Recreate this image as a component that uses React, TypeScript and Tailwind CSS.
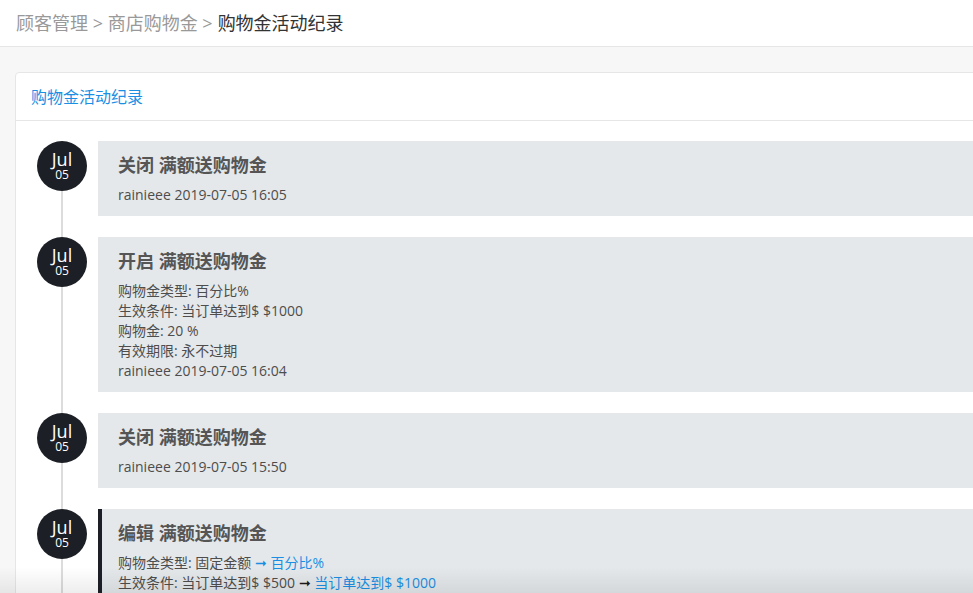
import React from "react";

const font = { fontFamily: '"Open Sans", "Noto Sans CJK SC", sans-serif' };

type Line = { label: string; from?: string; to?: string; value?: string; blueArrow?: boolean };
type Item = { title: string; lines: Line[]; meta: string; active?: boolean };

const items: Item[] = [
  { title: "关闭 满额送购物金", lines: [], meta: "rainieee 2019-07-05 16:05" },
  {
    title: "开启 满额送购物金",
    lines: [
      { label: "购物金类型", value: "百分比%" },
      { label: "生效条件", value: "当订单达到$ $1000" },
      { label: "购物金", value: "20 %" },
      { label: "有效期限", value: "永不过期" },
    ],
    meta: "rainieee 2019-07-05 16:04",
  },
  { title: "关闭 满额送购物金", lines: [], meta: "rainieee 2019-07-05 15:50" },
  {
    title: "编辑 满额送购物金",
    active: true,
    lines: [
      { label: "购物金类型", from: "固定金额", to: "百分比%", blueArrow: true },
      { label: "生效条件", from: "当订单达到$ $500", to: "当订单达到$ $1000" },
      { label: "购物金", from: "$ 50", to: "20 %" },
    ],
    meta: "rainieee 2019-07-05 15:49",
  },
];

function Circle() {
  return (
    <div className="w-[50px] h-[50px] shrink-0 rounded-full bg-[#1c2026] flex flex-col items-center justify-center text-white relative z-10">
      <div className="text-[18px] leading-[18px] mt-[-2px]">Jul</div>
      <div className="text-[12px] leading-[13px]">05</div>
    </div>
  );
}

export default function App() {
  return (
    <div className="w-[973px] h-[593px] overflow-hidden bg-[#f7f7f7] relative" style={font}>
      <div className="h-[47px] bg-white border-b border-[#e6e6e6] flex items-center pl-[16px] text-[18px] text-[#999]">
        <span>顾客管理 &gt; 商店购物金 &gt; </span>
        <span className="text-[#333] ml-[5px]">购物金活动纪录</span>
      </div>
      <div className="pt-[25px] pl-[15px]">
        <div className="w-[1000px] bg-white border border-[#e6e6e6] rounded-[4px]">
          <div className="h-[48px] border-b border-[#e6e6e6] flex items-center pl-[15px] text-[16px] text-[#1a8fe3]">
            购物金活动纪录
          </div>
          <div className="relative pt-[20px] pl-[21px] flex flex-col gap-[21px]">
            <div className="absolute left-[45px] top-[40px] bottom-0 w-[2px] bg-[#dcdcdc]" />
            {items.map((it, i) => (
              <div key={i} className="flex gap-[11px] items-start">
                <Circle />
                <div
                  className={
                    "flex-1 bg-[#e4e8eb] pt-[12px] pb-[11px] text-[#4d4d4d] " +
                    (it.active ? "border-l-[4px] border-[#1c2026] pl-[16px]" : "pl-[20px]")
                  }
                >
                  <div className="text-[18px] leading-[24px] font-bold mb-[8px] text-[#555]">{it.title}</div>
                  {it.lines.map((l, j) => (
                    <div key={j} className="text-[14px] leading-[20px]">
                      {l.label}:{" "}
                      {l.value !== undefined ? (
                        l.value
                      ) : (
                        <>
                          {l.from}{" "}
                          <span className={l.blueArrow ? "text-[#1a8fe3]" : "text-[#1a1a1a]"}>➞</span>
                          <span className="text-[#1a8fe3]"> {l.to}</span>
                        </>
                      )}
                    </div>
                  ))}
                  <div className="text-[14px] leading-[20px]">{it.meta}</div>
                </div>
              </div>
            ))}
          </div>
        </div>
      </div>
      <div className="absolute left-0 right-0 bottom-0 h-[26px] bg-gradient-to-b from-transparent to-[rgba(0,0,0,0.07)] pointer-events-none" />
    </div>
  );
}
